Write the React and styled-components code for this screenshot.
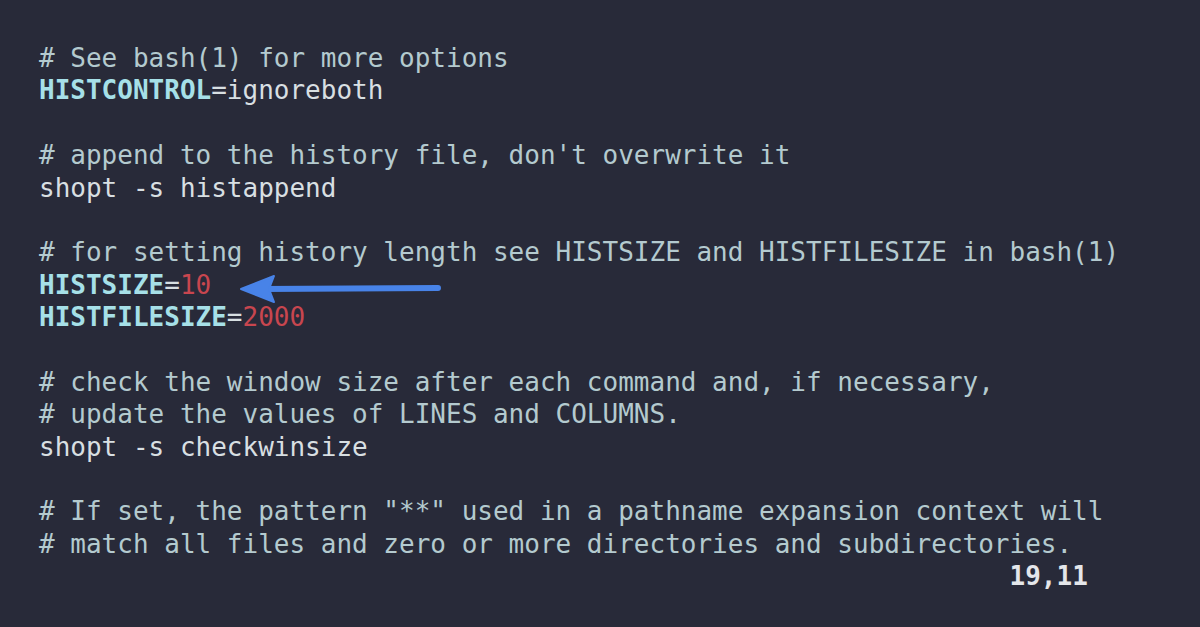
import React from "react";
import styled, { createGlobalStyle } from "styled-components";

const Global = createGlobalStyle`
  html, body { margin: 0; padding: 0; background: #282a39; }
  #root { width: 1200px; height: 627px; }
`;

const Screen = styled.div`
  position: relative;
  width: 1200px;
  height: 627px;
  box-sizing: border-box;
  background: #282a39;
  padding: 42px 0 0 39px;
  overflow: hidden;
`;

const Code = styled.pre`
  margin: 0;
  font-family: "DejaVu Sans Mono", "Liberation Mono", monospace;
  font-size: 26px;
  line-height: 32.4px;
  color: #c9d6da;
  white-space: pre;
`;

const Line = styled.div`
  height: 32.4px;
`;

const Comment = styled.span`
  color: #b4cacf;
`;

const Key = styled.span`
  color: #a6e0e8;
  font-weight: bold;
`;

const Plain = styled.span`
  color: #d8dfe2;
`;

const Num = styled.span`
  color: #c8464f;
`;

const Ruler = styled.span`
  color: #e4e6ea;
  font-weight: bold;
`;

const ArrowWrap = styled.svg`
  position: absolute;
  left: 236px;
  top: 273px;
`;

function Arrow() {
  return (
    <ArrowWrap width="212" height="32" viewBox="0 0 212 32">
      <line x1="26" y1="16" x2="202" y2="15" stroke="#4883e8" strokeWidth="6" strokeLinecap="round" />
      <path d="M5 16 L38 3 L33 16 L38 29 Z" fill="#4883e8" strokeLinejoin="round" stroke="#4883e8" strokeWidth="2" />
    </ArrowWrap>
  );
}

export default function App() {
  return (
    <Screen>
      <Global />
      <Code>
        <Line><Comment># See bash(1) for more options</Comment></Line>
        <Line><Key>HISTCONTROL</Key><Plain>=ignoreboth</Plain></Line>
        <Line />
        <Line><Comment># append to the history file, don't overwrite it</Comment></Line>
        <Line><Plain>shopt -s histappend</Plain></Line>
        <Line />
        <Line><Comment># for setting history length see HISTSIZE and HISTFILESIZE in bash(1)</Comment></Line>
        <Line><Key>HISTSIZE</Key><Plain>=</Plain><Num>10</Num></Line>
        <Line><Key>HISTFILESIZE</Key><Plain>=</Plain><Num>2000</Num></Line>
        <Line />
        <Line><Comment># check the window size after each command and, if necessary,</Comment></Line>
        <Line><Comment># update the values of LINES and COLUMNS.</Comment></Line>
        <Line><Plain>shopt -s checkwinsize</Plain></Line>
        <Line />
        <Line><Comment># If set, the pattern "**" used in a pathname expansion context will</Comment></Line>
        <Line><Comment># match all files and zero or more directories and subdirectories.</Comment></Line>
        <Line><Ruler>{" ".repeat(62)}19,11</Ruler></Line>
      </Code>
      <Arrow />
    </Screen>
  );
}
